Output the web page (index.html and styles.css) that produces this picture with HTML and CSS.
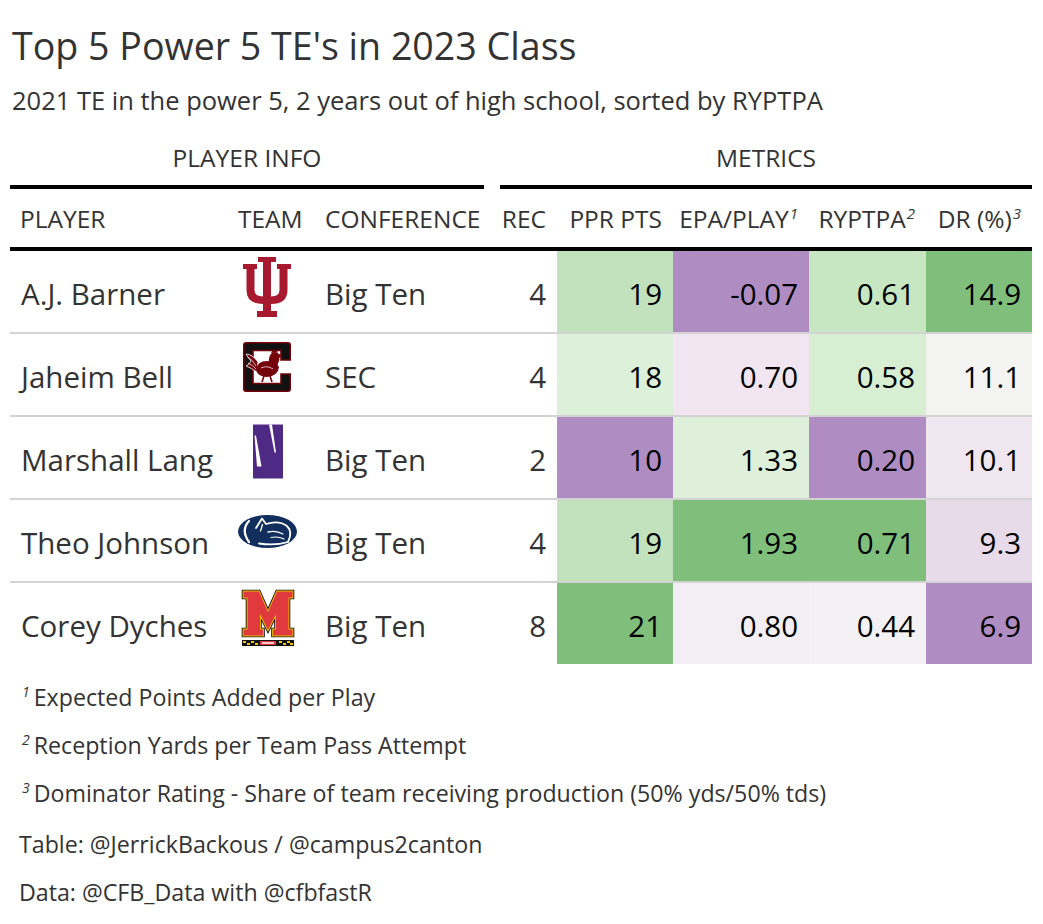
FILE: index.html
```html
<!DOCTYPE html>
<html lang="en">
<head>
<meta charset="utf-8">
<title>Top 5 Power 5 TE's in 2023 Class</title>
<link rel="stylesheet" href="styles.css">
</head>
<body>
<div class="page">
  <header class="heading">
    <h1 class="title">Top 5 Power 5 TE's in 2023 Class</h1>
    <p class="subtitle">2021 TE in the power 5, 2 years out of high school, sorted by RYPTPA</p>
  </header>

  <table class="tbl">
    <colgroup>
      <col class="c-player"><col class="c-team"><col class="c-conf"><col class="c-rec">
      <col class="c-ppr"><col class="c-epa"><col class="c-ryp"><col class="c-dr">
    </colgroup>
    <thead>
      <tr class="spanners">
        <th colspan="3" class="sp sp-left"><div class="sp-label">PLAYER INFO</div></th>
        <th colspan="5" class="sp sp-right"><div class="sp-label">METRICS</div></th>
      </tr>
      <tr class="lbl">
        <th>PLAYER</th>
        <th>TEAM</th>
        <th class="conf">CONFERENCE</th>
        <th class="num">REC</th>
        <th class="num">PPR PTS</th>
        <th class="num">EPA/PLAY<span class="mark">1</span></th>
        <th class="num">RYPTPA<span class="mark">2</span></th>
        <th class="num">DR (%)<span class="mark">3</span></th>
      </tr>
    </thead>
    <tbody>
      <tr>
        <td class="name">A.J. Barner</td>
        <td class="team">
          <svg class="logo" viewBox="0 0 64 60" width="64" height="60" aria-label="Indiana">
            <g transform="translate(8 0)" fill="#a6192e">
              <rect x="15" y="0" width="18" height="5"/>
              <rect x="20" y="0" width="8" height="56"/>
              <rect x="14" y="54" width="20" height="6"/>
              <rect x="0" y="7" width="14" height="5"/>
              <rect x="34" y="7" width="14" height="5"/>
              <path d="M3.5 7H11.5V33Q11.5 39.5 20 39.5H28Q36.5 39.5 36.5 33V7H44.5V33Q44.5 47 28 47H20Q3.5 47 3.5 33Z"/>
            </g>
          </svg>
        </td>
        <td class="conf">Big Ten</td>
        <td class="rec">4</td>
        <td class="num" style="background:#c1e2bc">19</td>
        <td class="num" style="background:#af8dc3">-0.07</td>
        <td class="num" style="background:#c7e6c2">0.61</td>
        <td class="num" style="background:#7fbf7b">14.9</td>
      </tr>
      <tr>
        <td class="name">Jaheim Bell</td>
        <td class="team">
          <svg class="logo" viewBox="0 0 64 60" width="64" height="60" aria-label="South Carolina">
            <g transform="translate(8 2)">
              <path d="M3 0.8H45Q47.2 0.8 47.2 3V18H38V8.5H10V41.5H38V32H47.2V47Q47.2 49.2 45 49.2H3Q0.8 49.2 0.8 47V3Q0.8 0.8 3 0.8Z" fill="#111" stroke="#73000a" stroke-width="1.6"/>
              <path d="M3 12Q9 12 15 20L14 30Q8 26 3 24Q7 22 8 19Q5 16 3 12Z" fill="#73000a" stroke="#fff" stroke-width="0.8"/>
              <g stroke="#fff" stroke-width="0.7" fill="none">
                <path d="M5 15Q10 18 13 24"/>
                <path d="M5 21Q10 23 13 27"/>
              </g>
              <g fill="#73000a">
                <path d="M13 28Q14 19 24 19Q33 19 36 25Q35 34 24 35Q15 35 13 28Z"/>
                <path d="M26 22Q25 14 29 11Q33 9 36 12L40 13.5L36.5 15.5Q36 20 34 24Z"/>
                <path d="M28 11Q29 7.5 31.5 8.5Q33 7 35 10.5Z"/>
                <path d="M35 15.5Q37 17 36 19.5Q34.5 18 35 15.5Z"/>
              </g>
              <path d="M18 26Q24 23 30 27" stroke="#fff" stroke-width="0.7" fill="none"/>
              <g stroke="#73000a" stroke-width="1.6">
                <path d="M21 34L19 40"/>
                <path d="M27 34L29 40"/>
              </g>
            </g>
          </svg>
        </td>
        <td class="conf">SEC</td>
        <td class="rec">4</td>
        <td class="num" style="background:#ddf0d9">18</td>
        <td class="num" style="background:#f0e5f0">0.70</td>
        <td class="num" style="background:#d8eed3">0.58</td>
        <td class="num" style="background:#f3f4f2">11.1</td>
      </tr>
      <tr>
        <td class="name">Marshall Lang</td>
        <td class="team">
          <svg class="logo" viewBox="0 0 64 60" width="64" height="60" aria-label="Northwestern">
            <g transform="translate(18 1.5)">
              <rect x="0" y="0" width="30" height="54" fill="#4e2a84"/>
              <polygon points="1.5,11 3,11 8.5,42 4,42" fill="#fff"/>
              <polygon points="16,0 19,0 23,28 21.5,28" fill="#fff"/>
            </g>
          </svg>
        </td>
        <td class="conf">Big Ten</td>
        <td class="rec">2</td>
        <td class="num" style="background:#af8dc3">10</td>
        <td class="num" style="background:#dff0da">1.33</td>
        <td class="num" style="background:#af8dc3">0.20</td>
        <td class="num" style="background:#efe6f0">10.1</td>
      </tr>
      <tr>
        <td class="name">Theo Johnson</td>
        <td class="team">
          <svg class="logo" viewBox="0 0 64 60" width="64" height="60" aria-label="Penn State">
            <g transform="translate(3 9)">
              <ellipse cx="29.5" cy="16.5" rx="29.5" ry="16.5" fill="#112e5c"/>
              <g fill="none" stroke="#fff" stroke-linecap="round" stroke-linejoin="round">
                <path d="M11 6Q2.5 15 11 27" stroke-width="2.2"/>
                <path d="M18 13L24 3.5L28 9Q41 5 49 11Q55 17 50 27Q37 31 21 28.5" stroke-width="1.8"/>
                <path d="M24.5 9.5L22.5 16" stroke-width="1.3"/>
                <path d="M30 17Q38 15 45 19" stroke-width="1.3"/>
                <path d="M33 22.5Q40 21 46 24" stroke-width="1.2"/>
              </g>
            </g>
          </svg>
        </td>
        <td class="conf">Big Ten</td>
        <td class="rec">4</td>
        <td class="num" style="background:#c1e2bc">19</td>
        <td class="num" style="background:#7fbf7b">1.93</td>
        <td class="num" style="background:#7fbf7b">0.71</td>
        <td class="num" style="background:#e8dbe9">9.3</td>
      </tr>
      <tr class="last">
        <td class="name">Corey Dyches</td>
        <td class="team">
          <svg class="logo" viewBox="0 0 64 60" width="64" height="60" aria-label="Maryland">
            <g transform="translate(7 1)">
              <path d="M1.5 1.5H17L26 22L35 1.5H50.5V7.5H46.5V39.5H50.5V45.5H31V39.5H34V24L26 40L18 24V39.5H21V45.5H1.5V39.5H5.5V7.5H1.5Z" fill="none" stroke="#111" stroke-width="3.6"/>
              <path d="M1.5 1.5H17L26 22L35 1.5H50.5V7.5H46.5V39.5H50.5V45.5H31V39.5H34V24L26 40L18 24V39.5H21V45.5H1.5V39.5H5.5V7.5H1.5Z" fill="none" stroke="#f5c400" stroke-width="1.8"/>
              <path d="M1.5 1.5H17L26 22L35 1.5H50.5V7.5H46.5V39.5H50.5V45.5H31V39.5H34V24L26 40L18 24V39.5H21V45.5H1.5V39.5H5.5V7.5H1.5Z" fill="#e03a3e"/>
              <rect x="0" y="50" width="52" height="6" fill="#111"/>
              <g fill="#f5c400">
                <rect x="1" y="51" width="3" height="2"/><rect x="5" y="53" width="3" height="2"/>
                <rect x="9" y="51" width="3" height="2"/><rect x="13" y="53" width="3" height="2"/>
                <rect x="37" y="51" width="3" height="2"/><rect x="41" y="53" width="3" height="2"/>
                <rect x="45" y="51" width="3" height="2"/><rect x="48" y="53" width="3" height="2"/>
              </g>
              <rect x="18" y="51" width="16" height="4" fill="#e03a3e"/>
              <rect x="20" y="52.3" width="12" height="1.4" fill="#fff"/>
            </g>
          </svg>
        </td>
        <td class="conf">Big Ten</td>
        <td class="rec">8</td>
        <td class="num" style="background:#7fbf7b">21</td>
        <td class="num" style="background:#f3edf4">0.80</td>
        <td class="num" style="background:#f4f1f5">0.44</td>
        <td class="num" style="background:#af8dc3">6.9</td>
      </tr>
    </tbody>
  </table>

  <footer class="notes">
    <div class="note"><span class="mark">1</span>Expected Points Added per Play</div>
    <div class="note"><span class="mark">2</span>Reception Yards per Team Pass Attempt</div>
    <div class="note"><span class="mark">3</span>Dominator Rating - Share of team receiving production (50% yds/50% tds)</div>
    <div class="source first">Table: @JerrickBackous / @campus2canton</div>
    <div class="source">Data: @CFB_Data with @cfbfastR</div>
  </footer>
</div>
</body>
</html>
```
FILE: styles.css
```css
body {
  margin: 0;
  background: #fff;
  color: #333;
  font-family: "Open Sans", "Noto Sans", sans-serif;
}

.page {
  padding: 0 11px 0 10px;
}

.title {
  margin: 0;
  padding: 24px 0 0 2px;
  font-size: 37.6px;
  line-height: 44px;
  font-weight: 400;
  color: #333;
}

.subtitle {
  margin: 15px 0 0;
  padding-left: 2px;
  font-size: 25.5px;
  line-height: 34px;
  color: #333;
}

.tbl {
  border-collapse: separate;
  border-spacing: 0;
  table-layout: fixed;
  width: 1022px;
}

.c-player { width: 218px; }
.c-team { width: 88px; }
.c-conf { width: 176px; }
.c-rec { width: 65px; }
.c-ppr { width: 116px; }
.c-epa { width: 136px; }
.c-ryp { width: 117px; }
.c-dr { width: 106px; }

.sp {
  padding: 26px 0 0;
  font-weight: 400;
  font-size: 24.5px;
  line-height: 30px;
  text-align: center;
  color: #333;
}

.sp-left { padding-right: 8px; }
.sp-right { padding-left: 8px; }

.sp-label {
  border-bottom: 4px solid #000;
  padding-bottom: 12px;
}

.lbl th {
  font-weight: 400;
  font-size: 24.5px;
  line-height: 30px;
  padding: 15px 11px 13px 10px;
  border-bottom: 4px solid #000;
  text-align: left;
  white-space: nowrap;
  color: #333;
}

.lbl th.conf { padding-left: 9px; }

.lbl th.num {
  text-align: right;
  padding-left: 0;
}

.mark {
  font-style: italic;
  font-size: 15px;
  line-height: 0;
  vertical-align: 9px;
  margin-left: 1px;
}

tbody td {
  height: 77px;
  padding: 4px 11px 0;
  border-bottom: 2px solid #d3d3d3;
  font-size: 29.5px;
  line-height: 36px;
  vertical-align: middle;
  white-space: nowrap;
  color: #333;
}

tbody tr.last td {
  border-bottom: 0;
}

td.name { padding-left: 11px; }
td.conf { padding-left: 9px; }

tbody td.team {
  height: 81px;
  padding: 0 17px 0 7px;
}

.logo {
  display: block;
  margin-bottom: 9px;
}

td.rec {
  text-align: right;
  color: #333;
}

td.num {
  text-align: right;
  color: #000;
}

.notes {
  padding-top: 9px;
}

.note {
  font-size: 23.2px;
  line-height: 48px;
  padding-left: 12px;
  white-space: nowrap;
  color: #333;
}

.note .mark {
  font-size: 14px;
  margin-left: 0;
  margin-right: 4px;
}

.source {
  font-size: 23.2px;
  line-height: 48px;
  padding-left: 9px;
  white-space: nowrap;
  color: #333;
}

.source.first {
  margin-top: 3px;
}
```
